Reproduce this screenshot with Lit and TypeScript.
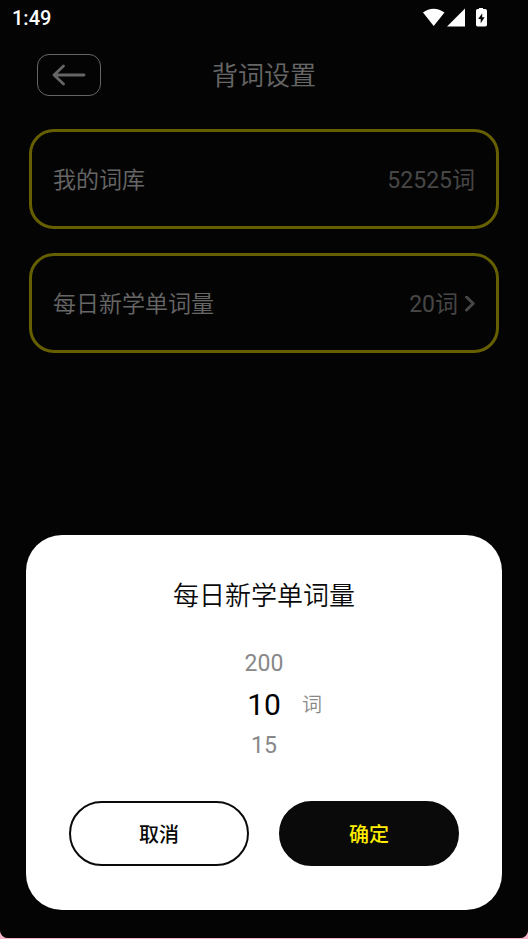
import { LitElement, html, css } from "lit";
import { customElement, property, state } from "lit/decorators.js";

@customElement("status-bar")
class StatusBar extends LitElement {
  static styles = css`
    :host {
      display: flex;
      justify-content: space-between;
      align-items: center;
      height: 36px;
      padding: 0 40px 0 12px;
      color: #fff;
    }
    .time {
      font-size: 20px;
      line-height: 36px;
      font-weight: 500;
    }
    .icons {
      display: block;
      width: 66px;
      height: 20px;
    }
  `;

  render() {
    return html`
      <span class="time">1:49</span>
      <svg class="icons" viewBox="0 0 66 20" fill="currentColor" aria-hidden="true">
        <path d="M1 4.5C7-0.6 16-0.6 22.5 4.5L11.7 18Z" />
        <path d="M25 18.5L43 0.5V18.5Z" />
        <path
          fill-rule="evenodd"
          d="M57 -0.4H61V1H63Q65 1 65 2.7V16.8Q65 18.5 63.2 18.5H55.6Q54 18.5 54 16.8V2.7Q54 1 55.6 1H57ZM60.2 5.2L56.2 11H58.7V15.3L62.6 9.3H60.2Z"
        />
      </svg>
    `;
  }
}

@customElement("setting-card")
class SettingCard extends LitElement {
  @property() label = "";
  @property() value = "";
  @property({ type: Boolean }) arrow = false;

  static styles = css`
    :host {
      display: block;
    }
    .card {
      display: flex;
      align-items: center;
      justify-content: space-between;
      box-sizing: border-box;
      width: 100%;
      margin: 0;
      padding: 34px 21px 30px;
      border: 3px solid #ffee00;
      border-radius: 25px;
      background: none;
      font: inherit;
      text-align: left;
      color: #fff;
    }
    .label {
      font-size: 23px;
      line-height: 30px;
      font-weight: 350;
    }
    .value {
      display: flex;
      align-items: center;
      font-size: 23px;
      line-height: 30px;
      color: #b0b0b0;
    }
    .chevron {
      width: 10px;
      height: 18px;
      margin-left: 7px;
    }
  `;

  render() {
    const content = html`
      <span class="label">${this.label}</span>
      <span class="value">
        ${this.value}
        ${this.arrow
          ? html`<svg class="chevron" viewBox="0 0 10 18" fill="none" stroke="currentColor"
              stroke-width="3" stroke-linecap="round" stroke-linejoin="round" aria-hidden="true">
              <path d="M1.5 1L8.2 7.5L1.5 14" />
            </svg>`
          : null}
      </span>
    `;
    return this.arrow
      ? html`<button class="card" type="button">${content}</button>`
      : html`<div class="card">${content}</div>`;
  }
}

@customElement("count-dialog")
class CountDialog extends LitElement {
  @state() private options = [200, 10, 15];
  @state() private selected = 1;

  static styles = css`
    :host {
      display: block;
    }
    .dialog {
      padding: 41px 43px 44px;
      border-radius: 36px;
      background: #fff;
      color: #0a0a0a;
    }
    .title {
      margin: 0;
      font-size: 26px;
      line-height: 40px;
      font-weight: 350;
      text-align: center;
    }
    .picker {
      display: grid;
      grid-template-columns: 1fr 60px 1fr;
      align-items: center;
      margin: 27px 0 35px;
    }
    .options {
      display: grid;
      grid-column: 2;
      justify-items: stretch;
    }
    .option {
      margin: 0;
      padding: 0;
      border: 0;
      background: none;
      font: inherit;
      font-size: 23px;
      line-height: 41px;
      text-align: center;
      color: #888;
    }
    .option.selected {
      font-size: 30px;
      color: #000;
    }
    .unit {
      padding-left: 8px;
      font-size: 20px;
      line-height: 30px;
      font-weight: 350;
      color: #888;
    }
    .actions {
      display: grid;
      grid-template-columns: 1fr 1fr;
      gap: 30px;
    }
    .action {
      height: 65px;
      margin: 0;
      padding: 0;
      border: 2px solid #0a0a0a;
      border-radius: 33px;
      background: #fff;
      color: #0a0a0a;
      font: inherit;
      font-size: 20px;
      font-weight: 500;
    }
    .action.primary {
      background: #0a0a0a;
      color: #ffee00;
    }
  `;

  render() {
    return html`
      <section class="dialog" role="dialog" aria-labelledby="title">
        <h2 class="title" id="title">每日新学单词量</h2>
        <div class="picker">
          <div class="options">
            ${this.options.map(
              (n, i) => html`<button
                type="button"
                class="option ${i === this.selected ? "selected" : ""}"
                @click=${() => (this.selected = i)}
              >${n}</button>`
            )}
          </div>
          <span class="unit">词</span>
        </div>
        <div class="actions">
          <button class="action" type="button">取消</button>
          <button class="action primary" type="button">确定</button>
        </div>
      </section>
    `;
  }
}

@customElement("app-root")
class AppRoot extends LitElement {
  static styles = css`
    :host {
      display: block;
      box-sizing: border-box;
      min-height: 100vh;
      padding-bottom: 1px;
      background: #f5b5c8;
      font-family: Roboto, "Noto Sans CJK SC", sans-serif;
    }
    .screen {
      position: relative;
      min-height: calc(100vh - 1px);
      border-radius: 0 0 8px 8px;
      overflow: hidden;
      background: #0a0a0a;
    }
    .status {
      position: relative;
      z-index: 1;
    }
    .header {
      display: grid;
      grid-template-columns: 1fr auto 1fr;
      align-items: center;
      padding: 18px 37px 0;
    }
    .back {
      display: flex;
      align-items: center;
      justify-content: center;
      box-sizing: border-box;
      width: 64px;
      height: 42px;
      padding: 0;
      border: 1px solid #fff;
      border-radius: 12px;
      background: none;
      color: #fff;
    }
    .arrow {
      width: 34px;
      height: 22px;
    }
    .heading {
      margin: 0;
      padding-top: 2px;
      font-size: 26px;
      line-height: 40px;
      font-weight: 350;
      color: #fff;
    }
    .cards {
      display: grid;
      gap: 24px;
      padding: 33px 29px;
    }
    .overlay {
      position: absolute;
      inset: 0;
      display: flex;
      flex-direction: column;
      justify-content: flex-end;
      padding: 0 26px 28px;
      background: rgba(0, 0, 0, 0.6);
    }
  `;

  render() {
    return html`
      <main class="screen">
        <status-bar class="status"></status-bar>
        <header class="header">
          <button class="back" type="button" aria-label="返回">
            <svg class="arrow" viewBox="0 0 34 22" fill="none" stroke="currentColor"
              stroke-width="2.8" stroke-linecap="round" stroke-linejoin="round" aria-hidden="true">
              <path d="M11.5 2L2 11L11.5 20M2 11H32" />
            </svg>
          </button>
          <h1 class="heading">背词设置</h1>
        </header>
        <div class="cards">
          <setting-card label="我的词库" value="52525词"></setting-card>
          <setting-card label="每日新学单词量" value="20词" arrow></setting-card>
        </div>
        <div class="overlay">
          <count-dialog></count-dialog>
        </div>
      </main>
    `;
  }
}
